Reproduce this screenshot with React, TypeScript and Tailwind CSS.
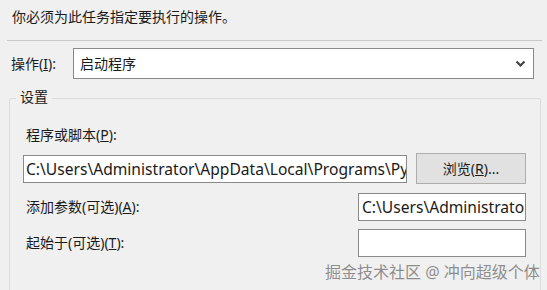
import React from "react";

function U({ c }: { c: string }) {
  return <span className="underline underline-offset-[1px]">{c}</span>;
}

export default function App() {
  return (
    <div className="relative w-[547px] h-[290px] overflow-hidden bg-[#f0f0f0] text-[14px] text-[#1a1a1a] [font-family:'Noto_Sans','Noto_Sans_CJK_SC',sans-serif]">
      <div className="pl-[12px] pt-[7px] h-[30px] leading-[20px]">你必须为此任务指定要执行的操作。</div>
      <div className="ml-[7px] mr-[5px] mt-[10px] border-t border-[#c8c8c8]" />
      <div className="flex items-center mt-[7px] pl-[11px] pr-[13px] h-[31px]">
        <div className="w-[62px] leading-[20px]">
          操作(<U c="I" />):
        </div>
        <div className="flex-1 h-[31px] bg-white border border-[#8a8a8a] flex items-center pl-[6px] pr-[7px]">
          <span className="flex-1 leading-[20px]">启动程序</span>
          <svg width="11" height="8" viewBox="0 0 11 8">
            <path d="M1.5 1.5 L5.5 5.5 L9.5 1.5" stroke="#444" strokeWidth="2.2" fill="none" />
          </svg>
        </div>
      </div>
      <div className="relative mt-[19px] ml-[9px] mr-[6px] h-[200px] border border-[#dcdcdc] rounded-[2px]">
        <div className="absolute -top-[12px] left-[6px] px-[4px] bg-[#f0f0f0] leading-[20px]">设置</div>
        <div className="pl-[16px] pt-[26px] leading-[20px]">
          程序或脚本(<U c="P" />):
        </div>
        <div className="flex items-center pl-[13px] mt-[8px] gap-[9px]">
          <div className="w-[384px] h-[28px] bg-white border border-[#8a8a8a] overflow-hidden whitespace-nowrap pl-[2px] leading-[26px] text-[15.6px]">
            C:\Users\Administrator\AppData\Local\Programs\Python
          </div>
          <div className="w-[110px] h-[31px] bg-[#e1e1e1] border border-[#adadad] flex items-center justify-center leading-[20px]">
            浏览(<U c="R" />)...
          </div>
        </div>
        <div className="flex items-center pl-[16px] mt-[9px] h-[28px]">
          <div className="flex-1 leading-[20px]">
            添加参数(可选)(<U c="A" />):
          </div>
          <div className="w-[168px] h-[28px] bg-white border border-[#8a8a8a] overflow-hidden whitespace-nowrap pl-[3px] leading-[26px] mr-[14px] text-[15.6px]">
            C:\Users\Administrator
          </div>
        </div>
        <div className="flex items-center pl-[16px] mt-[8px] h-[28px]">
          <div className="flex-1 leading-[20px]">
            起始于(可选)(<U c="T" />):
          </div>
          <div className="w-[168px] h-[28px] bg-white border border-[#8a8a8a] mr-[14px]" />
        </div>
      </div>
      <div className="absolute left-[325px] top-[261px] text-[16px] leading-[22px] text-[#8c8c8c] whitespace-nowrap [text-shadow:0_0_1px_#fff]">
        掘金技术社区 @ 冲向超级个体
      </div>
    </div>
  );
}
